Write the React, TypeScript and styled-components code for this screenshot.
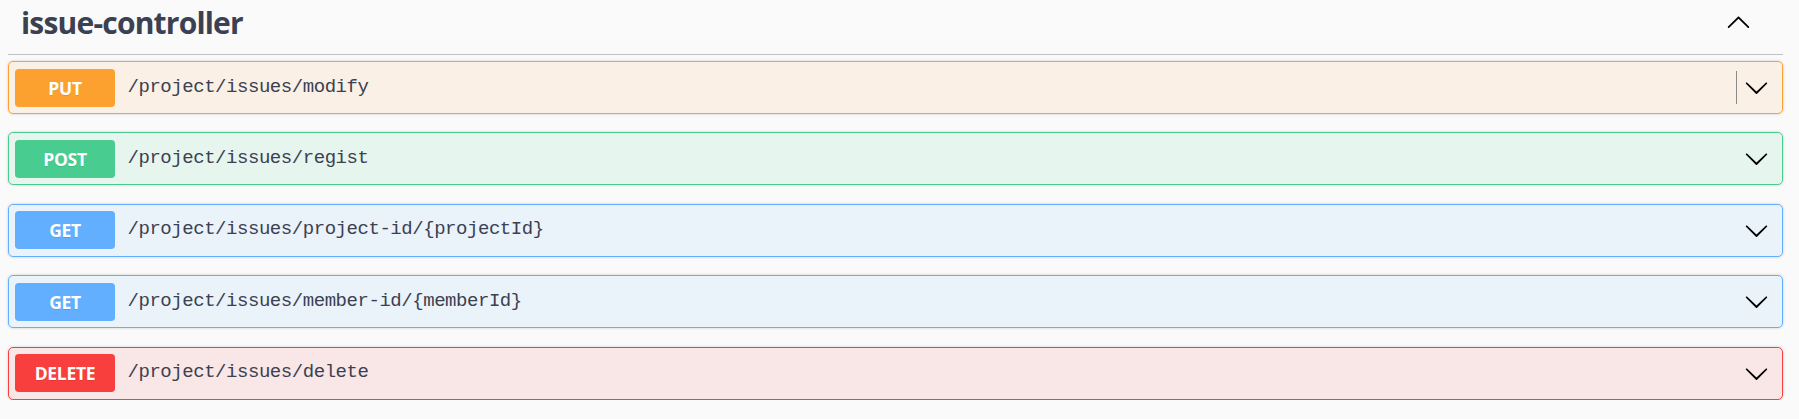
import React from "react";
import styled, { createGlobalStyle } from "styled-components";

const GlobalStyle = createGlobalStyle`
  html, body {
    margin: 0;
    padding: 0;
    background: #fafafa;
  }
  body {
    font-family: "Open Sans", "Noto Sans", sans-serif;
    color: #3b4151;
  }
`;

type Method = "put" | "post" | "get" | "delete";

const COLORS: Record<Method, { main: string; bg: string }> = {
  put: { main: "#fca130", bg: "rgba(252,161,48,.1)" },
  post: { main: "#49cc90", bg: "rgba(73,204,144,.1)" },
  get: { main: "#61affe", bg: "rgba(97,175,254,.1)" },
  delete: { main: "#f93e3e", bg: "rgba(249,62,62,.1)" },
};

const Wrapper = styled.div`
  padding: 0 16px 0 8px;
`;

const TagHeader = styled.div`
  display: flex;
  align-items: flex-start;
  justify-content: space-between;
  padding: 3px 32px 11px 13px;
  border-bottom: 1px solid rgba(59, 65, 81, 0.3);
`;

const TagTitle = styled.h3`
  margin: 0;
  font-family: "Open Sans", "Noto Sans", sans-serif;
  font-size: 30px;
  line-height: 40px;
  font-weight: 700;
  letter-spacing: -0.8px;
  color: #3b4151;
`;

const ToggleButton = styled.button`
  display: flex;
  align-items: center;
  justify-content: center;
  background: none;
  border: none;
  padding: 0;
  margin-top: 6px;
  cursor: pointer;
  color: #000;
`;

const OpList = styled.div`
  display: flex;
  flex-direction: column;
  gap: 18.4px;
  padding-top: 6px;
`;

const OpBlock = styled.div<{ $method: Method }>`
  display: flex;
  align-items: center;
  box-sizing: border-box;
  height: 53px;
  padding: 0 13px 0 6px;
  border: 1px solid ${(p) => COLORS[p.$method].main};
  background: ${(p) => COLORS[p.$method].bg};
  border-radius: 5px;
  box-shadow: 0 0 3px rgba(0, 0, 0, 0.19);
`;

const MethodBadge = styled.span<{ $method: Method }>`
  display: flex;
  align-items: center;
  justify-content: center;
  flex: none;
  width: 100px;
  height: 38px;
  border-radius: 3.75px;
  background: ${(p) => COLORS[p.$method].main};
  color: #fff;
  font-family: "Open Sans", "Noto Sans", sans-serif;
  font-size: 17.5px;
  font-weight: 700;
  letter-spacing: -0.3px;
  text-shadow: 0 1px 0 rgba(0, 0, 0, 0.1);
  text-transform: uppercase;
`;

const PathText = styled.span`
  flex: 1;
  padding: 0 12.5px;
  font-family: "Liberation Mono", "DejaVu Sans Mono", monospace;
  font-size: 19px;
  letter-spacing: -0.45px;
  color: #3b4151;
  margin-top: -2px;
`;

const Divider = styled.span`
  width: 1px;
  height: 33px;
  background: #8a8a8a;
  margin-right: 7px;
`;

const ChevronButton = styled.span`
  display: flex;
  align-items: center;
  justify-content: center;
  color: #000;
`;

const ArrowUp = () => (
  <svg width="25" height="25" viewBox="0 0 20 20" fill="currentColor">
    <path d="M17.418 14.908c.272.268.709.268.979 0s.271-.701 0-.969l-7.908-7.83c-.27-.268-.707-.268-.979 0l-7.908 7.83c-.27.268-.27.701 0 .969.271.268.709.268.979 0L10 7.767l7.418 7.141z" />
  </svg>
);

const ArrowDown = () => (
  <svg width="25" height="25" viewBox="0 0 20 20" fill="currentColor">
    <path d="M17.418 6.109c.272-.268.709-.268.979 0s.271.701 0 .969l-7.908 7.830c-.27.268-.707.268-.979 0l-7.908-7.830c-.27-.268-.27-.701 0-.969.271-.268.709-.268.979 0L10 13.25l7.418-7.141z" />
  </svg>
);

const ops: { method: Method; path: string; divider?: boolean }[] = [
  { method: "put", path: "/project/issues/modify", divider: true },
  { method: "post", path: "/project/issues/regist" },
  { method: "get", path: "/project/issues/project-id/{projectId}" },
  { method: "get", path: "/project/issues/member-id/{memberId}" },
  { method: "delete", path: "/project/issues/delete" },
];

export default function App() {
  return (
    <>
      <GlobalStyle />
      <Wrapper>
        <TagHeader>
          <TagTitle>issue-controller</TagTitle>
          <ToggleButton aria-label="collapse">
            <ArrowUp />
          </ToggleButton>
        </TagHeader>
        <OpList>
          {ops.map((op, i) => (
            <OpBlock key={i} $method={op.method}>
              <MethodBadge $method={op.method}>{op.method}</MethodBadge>
              <PathText>{op.path}</PathText>
              {op.divider && <Divider />}
              <ChevronButton>
                <ArrowDown />
              </ChevronButton>
            </OpBlock>
          ))}
        </OpList>
      </Wrapper>
    </>
  );
}
